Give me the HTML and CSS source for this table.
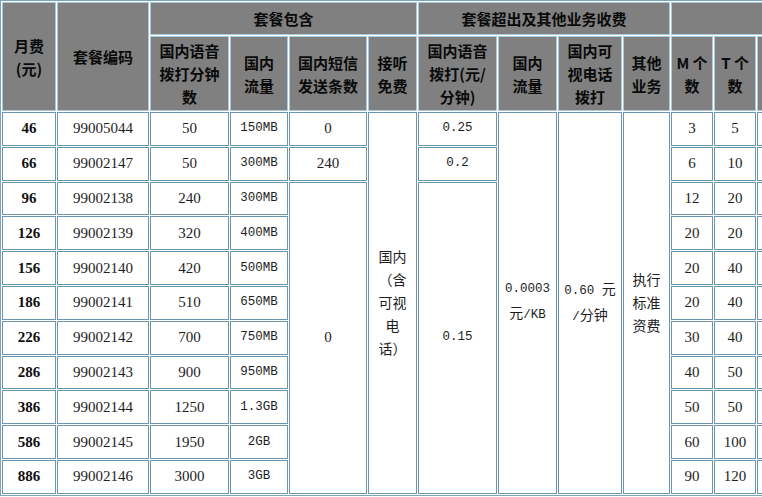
FILE: index.html
```html
<!DOCTYPE html>
<html lang="zh-CN">
<head>
<meta charset="utf-8">
<title>套餐资费表</title>
<link rel="stylesheet" href="styles.css">
</head>
<body>
<table class="fees">
  <colgroup>
    <col class="c1"><col class="c2"><col class="c3"><col class="c4"><col class="c5"><col class="c6"><col class="c7"><col class="c8"><col class="c9"><col class="c10"><col class="c11"><col class="c12"><col class="c13">
  </colgroup>
  <tr class="hrow1">
    <th rowspan="2">月费<br>(元)</th>
    <th rowspan="2">套餐编码</th>
    <th colspan="4">套餐包含</th>
    <th colspan="4">套餐超出及其他业务收费</th>
    <th colspan="3"></th>
  </tr>
  <tr class="hrow2">
    <th>国内语音<br>拨打分钟<br>数</th>
    <th>国内<br>流量</th>
    <th>国内短信<br>发送条数</th>
    <th>接听<br>免费</th>
    <th>国内语音<br>拨打(元/<br>分钟)</th>
    <th>国内<br>流量</th>
    <th>国内可<br>视电话<br>拨打</th>
    <th>其他<br>业务</th>
    <th>M 个<br>数</th>
    <th>T 个<br>数</th>
    <th></th>
  </tr>
  <tr>
    <td class="fee">46</td><td>99005044</td><td>50</td><td class="mono">150MB</td><td>0</td>
    <td rowspan="11" class="tall">国内<br>（含<br>可视<br>电<br>话）</td>
    <td class="mono">0.25</td>
    <td rowspan="11" class="mono">0.0003<br><span class="cjk">元</span>/KB</td>
    <td rowspan="11" class="mono">0.60 <span class="cjk">元</span><br>/<span class="cjk">分钟</span></td>
    <td rowspan="11" class="tall">执行<br>标准<br>资费</td>
    <td>3</td><td>5</td><td></td>
  </tr>
  <tr>
    <td class="fee">66</td><td>99002147</td><td>50</td><td class="mono">300MB</td><td>240</td>
    <td class="mono">0.2</td>
    <td>6</td><td>10</td><td></td>
  </tr>
  <tr>
    <td class="fee">96</td><td>99002138</td><td>240</td><td class="mono">300MB</td>
    <td rowspan="9">0</td>
    <td rowspan="9" class="mono">0.15</td>
    <td>12</td><td>20</td><td></td>
  </tr>
  <tr><td class="fee">126</td><td>99002139</td><td>320</td><td class="mono">400MB</td><td>20</td><td>20</td><td></td></tr>
  <tr><td class="fee">156</td><td>99002140</td><td>420</td><td class="mono">500MB</td><td>20</td><td>40</td><td></td></tr>
  <tr><td class="fee">186</td><td>99002141</td><td>510</td><td class="mono">650MB</td><td>20</td><td>40</td><td></td></tr>
  <tr><td class="fee">226</td><td>99002142</td><td>700</td><td class="mono">750MB</td><td>30</td><td>40</td><td></td></tr>
  <tr><td class="fee">286</td><td>99002143</td><td>900</td><td class="mono">950MB</td><td>40</td><td>50</td><td></td></tr>
  <tr><td class="fee">386</td><td>99002144</td><td>1250</td><td class="mono">1.3GB</td><td>50</td><td>50</td><td></td></tr>
  <tr><td class="fee">586</td><td>99002145</td><td>1950</td><td class="mono">2GB</td><td>60</td><td>100</td><td></td></tr>
  <tr><td class="fee">886</td><td>99002146</td><td>3000</td><td class="mono">3GB</td><td>90</td><td>120</td><td></td></tr>
</table>
</body>
</html>
```
FILE: styles.css
```css
html, body {
  margin: 0;
  padding: 0;
  background: #ffffff;
}
body {
  width: 762px;
  height: 497px;
  overflow: hidden;
}
.fees {
  table-layout: fixed;
  width: 801px;
  border-collapse: separate;
  border-spacing: 1px;
  border: 1px solid #7ba5bc;
  background: #ffffff;
  font-family: "Liberation Serif", "Noto Sans CJK SC", serif;
  font-size: 15px;
  color: #1e1e1e;
}
.c1 { width: 54px; }
.c2 { width: 92px; }
.c3 { width: 79px; }
.c4 { width: 58px; }
.c5 { width: 78px; }
.c6 { width: 49px; }
.c7 { width: 79px; }
.c8 { width: 59px; }
.c9 { width: 64px; }
.c10 { width: 47px; }
.c11 { width: 42px; }
.c12 { width: 42px; }
.c13 { width: 42px; }

.fees th {
  background: #808080;
  border: 1px solid #a9cadd;
  font-family: "Noto Sans CJK SC", sans-serif;
  font-weight: 700;
  font-size: 15px;
  line-height: 23px;
  color: #0a0a0a;
  padding: 0 2px;
  text-align: center;
  vertical-align: middle;
  white-space: nowrap;
}
.hrow1 th { height: 31px; }
.hrow2 th { height: 73px; }

.fees td {
  border: 1px solid #6b97ae;
  padding: 0 2px;
  height: 31.8px;
  text-align: center;
  vertical-align: middle;
  white-space: nowrap;
  line-height: 23px;
}
.fees td.fee {
  font-weight: 700;
  color: #111111;
}
.fees td.mono {
  font-family: "Liberation Mono", "Noto Sans CJK SC", monospace;
  font-size: 12.5px;
}
.fees .cjk {
  font-family: "Noto Sans CJK SC", sans-serif;
  font-size: 14px;
}
.fees td.tall {
  font-family: "Noto Sans CJK SC", sans-serif;
  font-size: 14px;
}
```
